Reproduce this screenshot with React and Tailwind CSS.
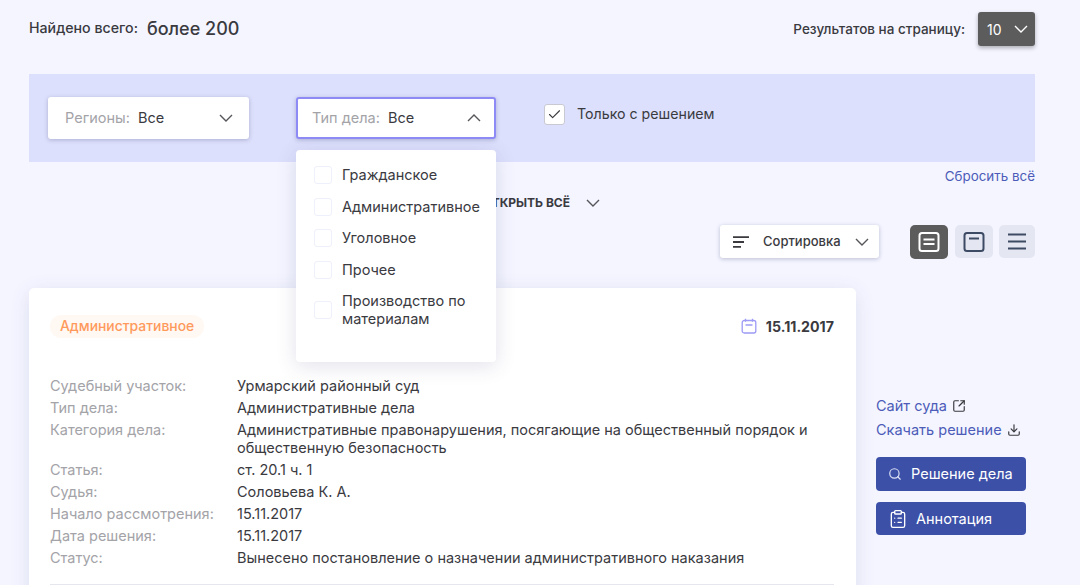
import React from 'react';
import { Check, ClipboardList, Download, Search, SquareArrowOutUpRight } from 'lucide-react';

const caseTypes = ['Гражданское', 'Административное', 'Уголовное', 'Прочее'];

const details = [
  ['Судебный участок:', 'Урмарский районный суд'],
  ['Тип дела:', 'Административные дела'],
  ['Категория дела:', 'Административные правонарушения, посягающие на общественный порядок и общественную безопасность'],
  ['Статья:', 'ст. 20.1 ч. 1'],
  ['Судья:', 'Соловьева К. А.'],
  ['Начало рассмотрения:', '15.11.2017'],
  ['Дата решения:', '15.11.2017'],
  ['Статус:', 'Вынесено постановление о назначении административного наказания'],
];

const Chevron = ({ up, color = '#55555a', className = '' }) => (
  <svg width="14" height="8" viewBox="0 0 14 8" fill="none" stroke={color} strokeWidth="1.4" className={className}>
    <path d={up ? 'M1 7l6-6 6 6' : 'M1 1l6 6 6-6'} />
  </svg>
);

const SortIcon = () => (
  <svg width="16" height="12" viewBox="0 0 16 12" fill="none" stroke="#3a3a3f" strokeWidth="1.8">
    <path d="M0 1.2h16M0 6h11M0 10.8h8" />
  </svg>
);

const CardFullIcon = () => (
  <svg width="22" height="20" viewBox="0 0 22 20" fill="none" stroke="#fff" strokeWidth="2">
    <rect x="1.5" y="1" width="19" height="18" rx="2.5" />
    <path d="M5.5 7.5h11M5.5 12h11" strokeWidth="2.2" />
  </svg>
);

const CardShortIcon = () => (
  <svg width="22" height="20" viewBox="0 0 22 20" fill="none" stroke="#3d4a63" strokeWidth="2">
    <rect x="1.5" y="1" width="19" height="18" rx="2.5" />
    <path d="M6 6.5h10" strokeWidth="2" />
  </svg>
);

const LinesIcon = () => (
  <svg width="20" height="17" viewBox="0 0 20 17" fill="none" stroke="#3d4a63" strokeWidth="1.8">
    <path d="M1 1.5h18M1 8.5h18M1 15.5h18" />
  </svg>
);

const CalendarIcon = () => (
  <svg width="16" height="16" viewBox="0 0 16 16" fill="none" stroke="#9d9bf5" strokeWidth="1.3">
    <rect x="1.2" y="2.5" width="13.6" height="12.5" rx="2" />
    <path d="M4.5 0.8v3M11.5 0.8v3M4.5 7h7" />
  </svg>
);

const FilterSelect = ({ label, open }) => (
  <div
    className={`flex h-[42px] items-center justify-between rounded-[3px] bg-white text-[14.5px] shadow-[0_1px_4px_rgba(60,60,110,0.3)] ${
      open ? 'w-[200px] border-2 border-[#8f8bf6] pl-[14px] pr-[13px]' : 'w-[201px] pl-[17px] pr-[16px]'
    }`}
  >
    <span>
      <span className="text-[#a3a3a8]">{label}:</span>
      <span className="ml-2 text-[#3a3a3f]">Все</span>
    </span>
    <Chevron up={open} />
  </div>
);

const DropdownItem = ({ children, className = '' }) => (
  <div className={`flex items-center gap-[10px] ${className}`}>
    <span className="h-[18px] w-[18px] shrink-0 rounded-[3px] border border-[#eef0fb] bg-white" />
    <span className="whitespace-nowrap leading-[18px]">{children}</span>
  </div>
);

export default function App() {
  return (
    <div className="h-[585px] w-[1080px] overflow-hidden bg-[#f4f5ff] pl-[29px] pr-[45px] font-['Inter','Noto_Sans',sans-serif] text-[#3a3a3f]">
      <div className="flex h-[74px] items-start justify-between pt-[12px]">
        <div className="flex h-[32px] items-center">
          <span className="text-[14.2px] font-medium">Найдено всего:</span>
          <span className="ml-[9px] text-[18px] font-medium">более 200</span>
        </div>
        <div className="flex items-center">
          <span className="text-[13.5px] font-medium">Результатов на страницу:</span>
          <div className="ml-[13px] flex h-[34px] w-[57px] items-center justify-between rounded-[3px] bg-[#5c5c5c] pl-[9px] pr-[7px] text-[14px] text-white shadow-[0_2px_4px_rgba(0,0,0,0.3)]">
            10
            <Chevron color="#fff" />
          </div>
        </div>
      </div>

      <div className="flex h-[88px] items-start bg-[#dce0fc] pl-[19px] pt-[23px]">
        <FilterSelect label="Регионы" />
        <div className="relative ml-[47px]">
          <FilterSelect label="Тип дела" open />
          <div className="absolute left-0 top-[53px] z-10 h-[212px] w-[200px] rounded-[4px] bg-white pl-[18px] pt-[16px] text-[14.5px] shadow-[0_4px_20px_rgba(70,70,130,0.16)]">
            <div className="flex flex-col gap-[13.7px]">
              {caseTypes.map((item) => (
                <DropdownItem key={item}>{item}</DropdownItem>
              ))}
              <DropdownItem className="-mt-[1px]">
                Производство по
                <br />
                материалам
              </DropdownItem>
            </div>
          </div>
        </div>
        <div className="ml-[48px] flex items-center pt-[7px]">
          <span className="flex h-[21px] w-[21px] items-center justify-center rounded-[3px] border border-[#c9c9d2] bg-white">
            <Check size={15} color="#3a3a3f" strokeWidth={1.8} />
          </span>
          <span className="ml-[12px] -mt-[2px] text-[14.2px]">Только с решением</span>
        </div>
      </div>

      <div className="mt-[6px] text-right text-[13.4px] leading-[16px] text-[#4c5cb8]">Сбросить всё</div>

      <div className="mt-[9px] flex items-center justify-end whitespace-nowrap pr-[433px] text-[12px] font-bold leading-[20px]">
        ОТКРЫТЬ ВСЁ
        <Chevron className="ml-[16px] mr-[2px]" />
      </div>

      <div className="mt-[12px] flex items-start justify-end">
        <div className="flex h-[33px] w-[159px] items-center rounded-[3px] bg-white pl-[13px] pr-[10px] text-[13px] font-medium shadow-[0_1px_4px_rgba(60,60,110,0.3)]">
          <SortIcon />
          <span className="ml-[14px]">Сортировка</span>
          <Chevron className="ml-auto" />
        </div>
        <div className="ml-[31px] flex h-[34px] w-[38px] items-center justify-center rounded-[5px] bg-[#5c5c5c]">
          <CardFullIcon />
        </div>
        <div className="ml-[7px] flex h-[33px] w-[38px] items-center justify-center rounded-[5px] bg-[#e4e6f2]">
          <CardShortIcon />
        </div>
        <div className="ml-[6px] flex h-[33px] w-[36px] items-center justify-center rounded-[5px] bg-[#e4e6f2]">
          <LinesIcon />
        </div>
      </div>

      <div className="mt-[29px] flex items-start">
        <div className="w-[827px] rounded-[5px] bg-white pb-[24px] pl-[21px] pr-[22px] pt-[27px] shadow-[0_4px_20px_rgba(70,70,130,0.12)]">
          <div className="flex items-center justify-between">
            <span className="flex h-[23px] items-center rounded-full bg-[#fff8f3] px-[10px] text-[13.9px] font-medium text-[#ff9a5c]">
              Административное
            </span>
            <span className="flex items-center text-[14.2px] font-bold">
              <CalendarIcon />
              <span className="ml-[9px]">15.11.2017</span>
            </span>
          </div>
          <div className="mt-[37px] text-[14.5px] leading-[18px]">
            {details.map(([label, value]) => (
              <div key={label} className="flex py-[2px]">
                <span className="w-[187px] shrink-0 text-[#a3a3a8]">{label}</span>
                <span className="w-[580px]">{value}</span>
              </div>
            ))}
          </div>
          <div className="mt-[15px] border-t border-[#e6e6ee]" />
        </div>

        <div className="ml-[20px] w-[150px] pt-[107px] text-[14.5px]">
          <div className="flex h-[22px] items-center text-[#4c5cb8]">
            Сайт суда
            <SquareArrowOutUpRight size={14} color="#3a3a3f" className="ml-[5px]" />
          </div>
          <div className="mt-[2px] flex h-[22px] items-center whitespace-nowrap text-[#4c5cb8]">
            Скачать решение
            <Download size={14} color="#3a3a3f" className="ml-[5px]" />
          </div>
          <div className="mt-[16px] flex h-[34px] items-center rounded-[4px] bg-[#3c50a8] pl-[12px] text-white">
            <Search size={14} color="#dfe3f7" />
            <span className="ml-[9px]">Решение дела</span>
          </div>
          <div className="mt-[11px] flex h-[33px] items-center rounded-[4px] bg-[#3c50a8] pl-[12px] text-white">
            <ClipboardList size={20} strokeWidth={1.6} />
            <span className="ml-[8px]">Аннотация</span>
          </div>
        </div>
      </div>
    </div>
  );
}
